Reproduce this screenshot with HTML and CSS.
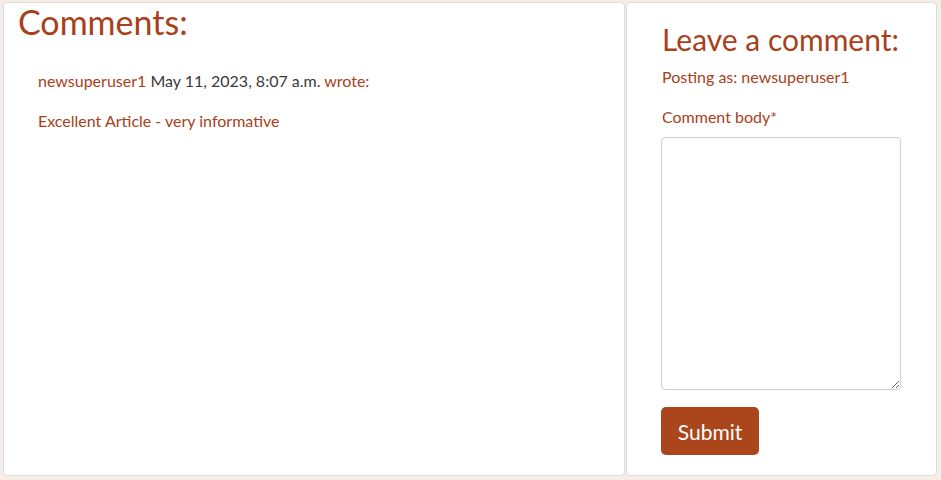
FILE: index.html
```html
<!DOCTYPE html>
<html lang="en">
<head>
<meta charset="utf-8">
<title>Comments</title>
<link rel="stylesheet" href="styles.css">
</head>
<body>
<div class="page">
  <section class="card comments">
    <h3 class="title">Comments:</h3>
    <div class="comment">
      <p class="meta"><span class="author">newsuperuser1</span> <span class="date">May 11, 2023, 8:07 a.m.</span> wrote:</p>
      <p class="body">Excellent Article - very informative</p>
    </div>
  </section>
  <section class="card form-card">
    <h3 class="form-title">Leave a comment:</h3>
    <p class="posting">Posting as: newsuperuser1</p>
    <form class="form">
      <label class="label" for="body">Comment body*</label>
      <textarea id="body" class="textarea"></textarea>
      <button type="button" class="submit">Submit</button>
    </form>
  </section>
</div>
</body>
</html>
```
FILE: styles.css
```css
* { box-sizing: border-box; }
html, body { margin: 0; height: 100%; }
body {
  background: #f5ede6;
  font-family: "Lato", "Noto Sans", sans-serif;
  color: #a8411b;
  font-size: 16px;
}
.page {
  display: flex;
  gap: 1px;
  padding: 2px 4px 4px 3px;
  height: 480px;
}
.card {
  background: #fff;
  border: 1px solid #dcdcdc;
  border-radius: 4px;
}
.comments {
  flex: 0 0 622px;
  padding: 0 14px;
}
.form-card {
  flex: 0 0 311px;
  padding: 0 34px;
}
.title {
  margin: 0;
  font-weight: 400;
  font-size: 34px;
  line-height: 38px;
}
.comment {
  padding: 28px 20px 0;
}
.meta, .body {
  margin: 0;
  line-height: 24px;
}
.meta { margin-bottom: 16px; }
.date { color: #3a3a3a; }
.form-title {
  margin: 19px 0 0 1px;
  font-weight: 400;
  font-size: 30px;
  line-height: 34px;
}
.posting {
  margin: 9px 0 0 1px;
  line-height: 24px;
}
.form { display: flex; flex-direction: column; align-items: flex-start; }
.label {
  margin: 16px 0 0 1px;
  line-height: 24px;
}
.textarea {
  margin-top: 8px;
  width: 240px;
  height: 253px;
  border: 1px solid #cfcfcf;
  border-radius: 4px;
  resize: vertical;
}
.submit {
  margin-top: 17px;
  width: 98px;
  height: 48px;
  background: #aa451c;
  color: #fff;
  border: none;
  border-radius: 5px;
  font-family: inherit;
  font-size: 21px;
}
```
